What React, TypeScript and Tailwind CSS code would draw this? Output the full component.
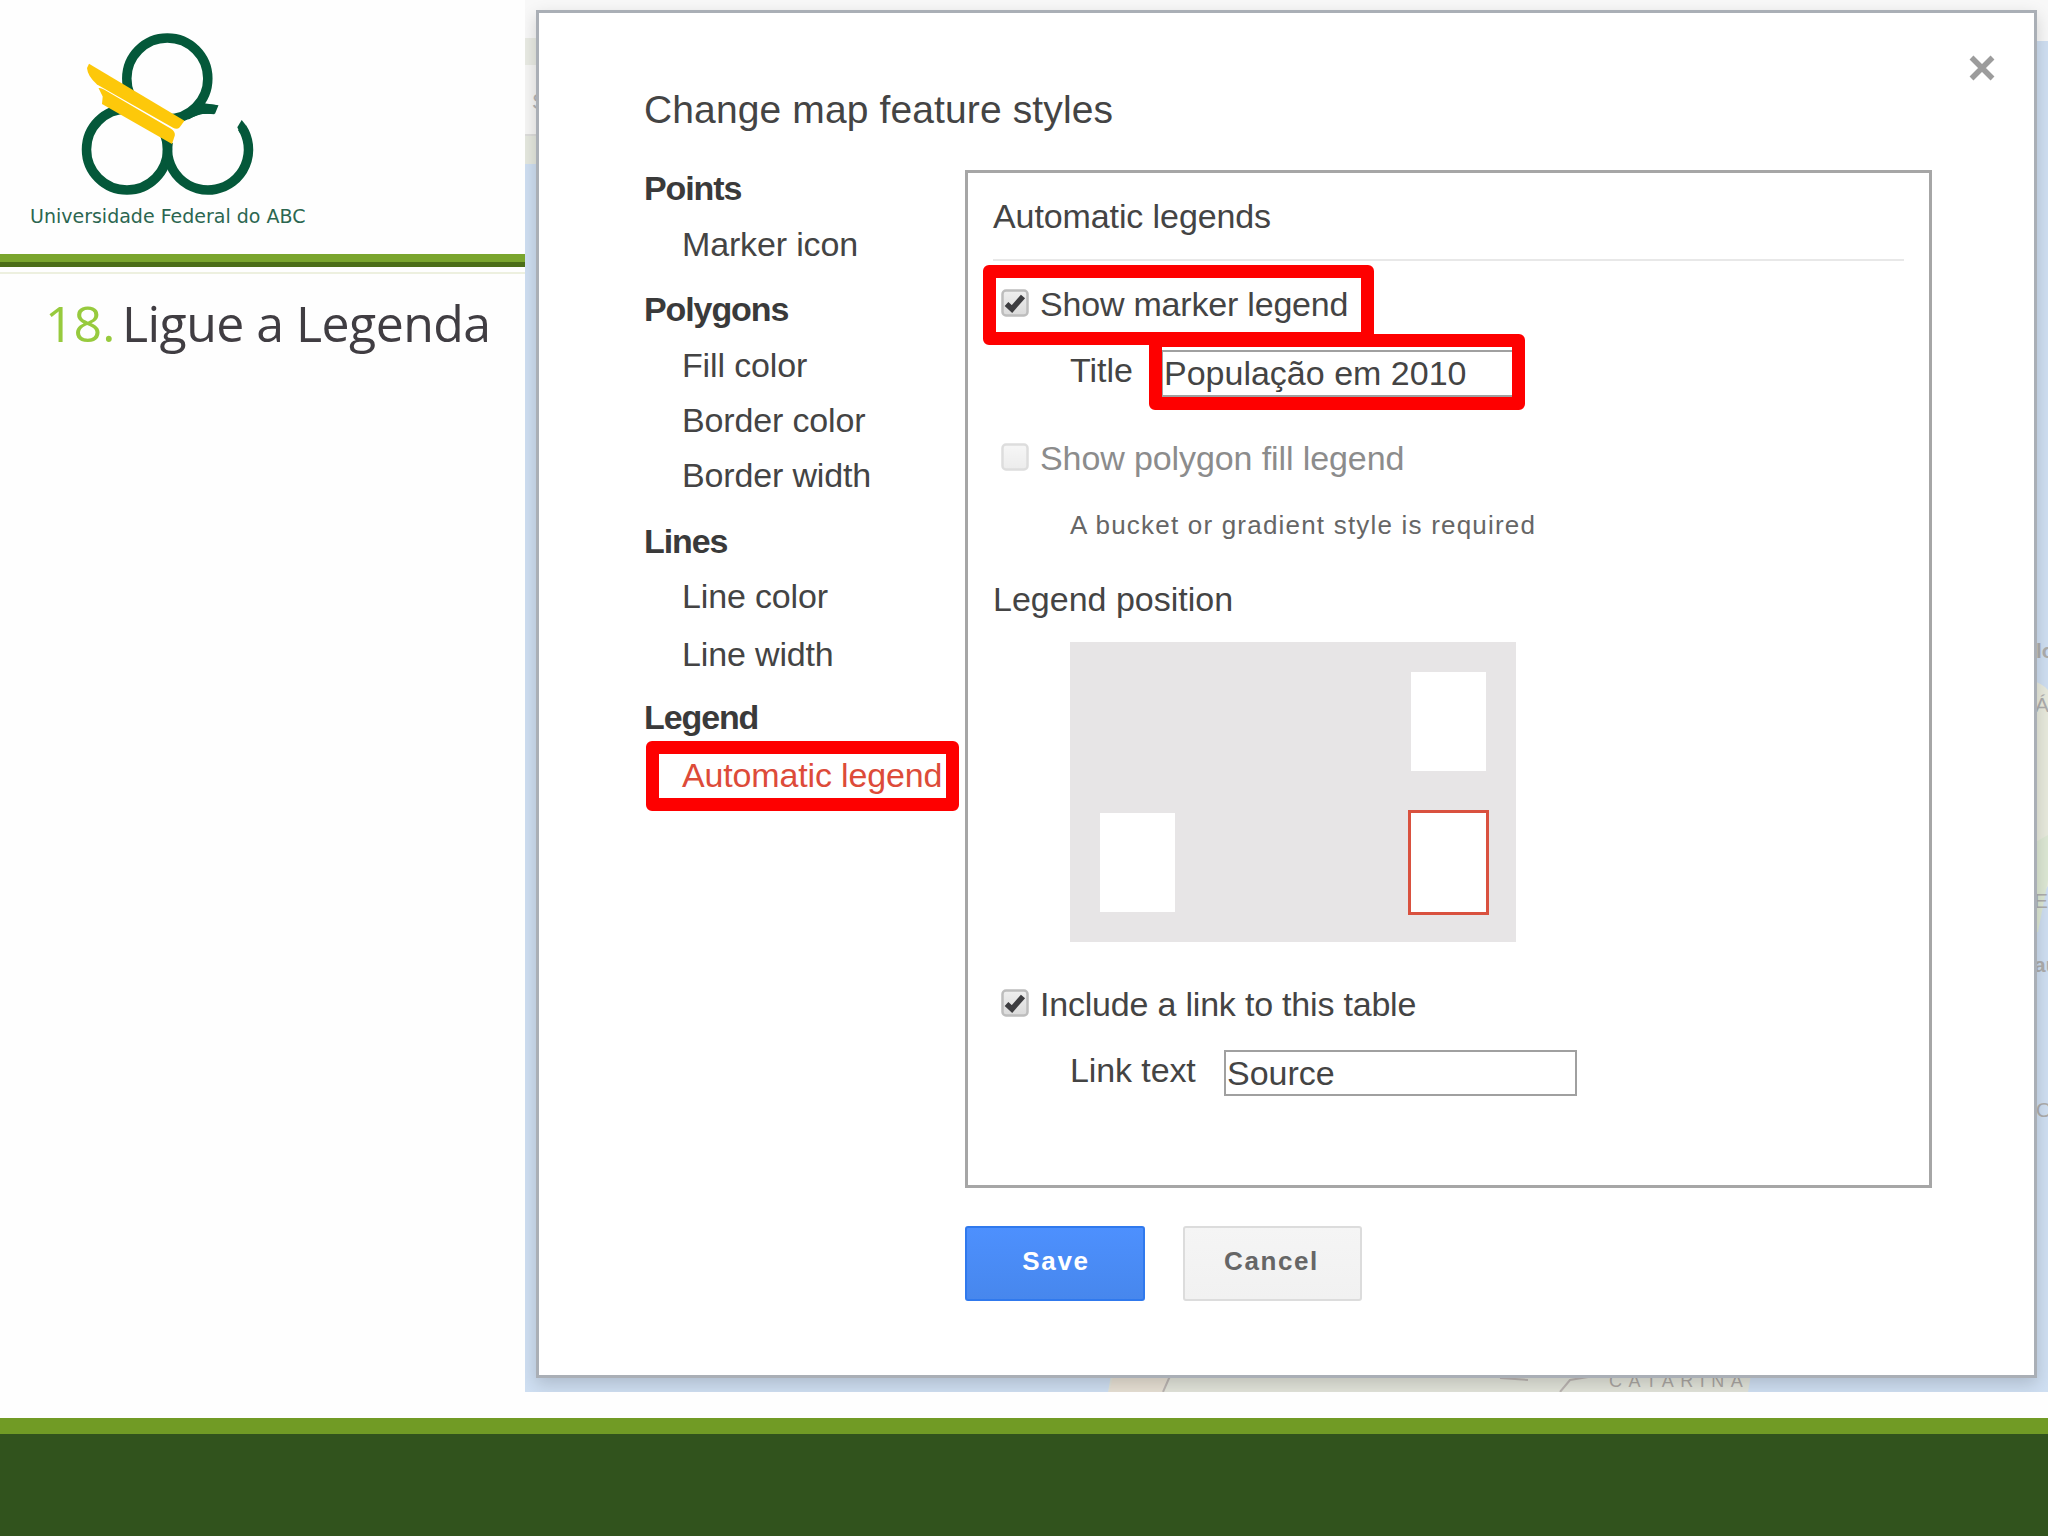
import React from 'react';

const groups: { title: string; className: string; items: { label: string; className: string; active?: boolean }[] }[] = [
  { title: 'Points', className: '', items: [{ label: 'Marker icon', className: 'mt-4' }] },
  {
    title: 'Polygons',
    className: 'mt-[25px]',
    items: [
      { label: 'Fill color', className: 'mt-4' },
      { label: 'Border color', className: 'mt-[15px]' },
      { label: 'Border width', className: 'mt-[15px]' },
    ],
  },
  {
    title: 'Lines',
    className: 'mt-[26px]',
    items: [
      { label: 'Line color', className: 'mt-[15px]' },
      { label: 'Line width', className: 'mt-[18px]' },
    ],
  },
  {
    title: 'Legend',
    className: 'mt-[23px]',
    items: [{ label: 'Automatic legend', className: 'mt-[18px]', active: true }],
  },
];

const Logo: React.FC = () => (
  <svg width="180" height="170" viewBox="78 28 180 170" className="block">
    <g fill="none" stroke="#04583a" strokeWidth="9.500">
      <circle cx="167.3" cy="78.500" r="40.500" />
      <circle cx="127" cy="149.500" r="40.500" />
      <path d="M215 109.600 A40.500 40.500 0 0 0 186 115.500" />
      <path d="M168.200 142 A40.500 40.500 0 1 0 242 127.500" />
    </g>
    <g fill="#04583a">
      <path d="M203 101 L205.500 103.500 L218.500 105.300 L215 113.700 L200 114 L184 121 L178 116 Z" />
      <path d="M241.700 120 L237.300 127.300 L240 133 L247 129 L245.300 124.500 Z" />
    </g>
    <path d="M96 86 L178 131.500" stroke="#fff" strokeWidth="9" />
    <path d="M89 63.700 L184.500 120.700 L179.500 127.500 Q177 130 173 127.800 L97 84.500 Q87.500 76 87 68 Z" fill="#fdc80a" />
    <path d="M98.500 88 Q101 87.500 104 89.500 L171 128.800 Q175.500 132 174.800 135.500 L172 144 L102 104 L102.700 96.500 Z" fill="#fdc80a" />
  </svg>
);

const MapBackground: React.FC = () => (
  <svg
    width="1523"
    height="1392"
    viewBox="525 0 1523 1392"
    className="absolute inset-0"
    fontFamily="'Liberation Sans', sans-serif"
  >
    <rect x="525" y="0" width="1523" height="1392" fill="#cfdff2" />
    <rect x="525" y="0" width="1523" height="41" fill="#f8f8f8" />
    <rect x="525" y="38" width="40" height="27" fill="#e9ebe4" />
    <rect x="525" y="65" width="40" height="70" fill="#f6f6f5" />
    <rect x="525" y="134" width="40" height="2" fill="#dddddb" />
    <rect x="525" y="136" width="40" height="28" fill="#e5e8df" />
    <text x="532" y="109" fontSize="22" fill="#b5b5b5">S</text>
    <path d="M2030 680 Q2042 683 2048 690 V886 L2040 898 L2030 932 Z" fill="#e8eadd" />
    <path d="M2030 845 L2048 835 V880 L2038 932 L2030 932 Z" fill="#dde8d4" />
    <g fontSize="21" fill="#adadad">
      <text x="2036" y="658" fontWeight="bold">lo</text>
      <text x="2035" y="712">Á</text>
      <text x="2034" y="908">E</text>
      <text x="2034" y="972" fontWeight="bold">au</text>
      <text x="2036" y="1117">Oc</text>
    </g>
    <path d="M1112 1370 H1752 L1748 1392 H1108 Z" fill="#e2e4da" />
    <path d="M1115 1370 H1170 L1163 1392 H1109 Z" fill="#e7e0d4" />
    <path d="M1170 1376 L1163 1392 M1500 1378 L1528 1380 M1560 1392 L1570 1380 L1588 1377" stroke="#bbb5b2" strokeWidth="2" fill="none" />
    <text x="1609" y="1387" fontSize="18" letterSpacing="6.500" fill="#aaa6a2">CATARINA</text>
  </svg>
);

const Checkbox: React.FC<{ checked?: boolean; disabled?: boolean }> = ({ checked, disabled }) => (
  <svg width="28" height="28" viewBox="0 0 28 28" className="-mt-0.5 mr-[11px] shrink-0" opacity={disabled ? 0.5 : 1}>
    <defs>
      <linearGradient id="box" x1="0" y1="0" x2="0" y2="1">
        <stop offset="0" stopColor="#efefef" />
        <stop offset="1" stopColor="#dadada" />
      </linearGradient>
    </defs>
    <rect x="1.500" y="1.500" width="25" height="25" rx="3.500" fill="url(#box)" stroke="#bdbdbd" strokeWidth="2.500" />
    {checked && <path d="M5.500 15 L11 20 L22 7.500" fill="none" stroke="#3d3d40" strokeWidth="5.500" />}
  </svg>
);

const Highlight: React.FC<{ className: string }> = ({ className }) => (
  <div className={`absolute rounded-md bg-transparent border-[13px] border-[#fe0000] ${className}`} />
);

const Sidebar: React.FC = () => (
  <nav className="w-[321px] shrink-0">
    {groups.map((group) => (
      <div key={group.title} className={group.className}>
        <h3 className="font-bold tracking-[-1.1px] text-[#3a3a3a]">{group.title}</h3>
        {group.items.map((item) => (
          <div
            key={item.label}
            className={`pl-[38px] tracking-[-0.15px] ${item.className} ${item.active ? 'text-[#dd4b39]' : ''}`}
          >
            {item.label}
          </div>
        ))}
      </div>
    ))}
  </nav>
);

const LegendPanel: React.FC = () => (
  <section className="mt-0.5 w-[967px] h-[1018px] border-[3px] border-[#a6a6a6] px-[25px] pt-[23px]">
    <h3 className="tracking-[-0.1px]">Automatic legends</h3>
    <div className="mt-[23px] h-0.5 bg-[#e8e8e8]" />
    <div className="mt-[23px] flex items-center pl-2 tracking-[-0.2px]">
      <Checkbox checked />
      Show marker legend
    </div>
    <div className="mt-[26px] flex pl-[77px]">
      <span className="w-[91px]">Title</span>
      <div className="h-[47px] w-[360px] border-2 border-[#a0a0a0] bg-white pl-px pt-px">População em 2010</div>
    </div>
    <div className="mt-[41px] flex items-center pl-2 tracking-[-0.1px] text-[#8c8c8c]">
      <Checkbox disabled />
      Show polygon fill legend
    </div>
    <p className="mt-8 pl-[77px] text-[26px] leading-[30px] tracking-[1.2px] text-[#666]">
      A bucket or gradient style is required
    </p>
    <h3 className="mt-[39px]">Legend position</h3>
    <div className="mt-[23px] ml-[77px] flex h-[300px] w-[446px] items-end justify-between bg-[#e7e5e6] pl-[30px] pr-[27px] pb-[27px]">
      <div className="mb-[3px] h-[99px] w-[75px] bg-white" />
      <div className="flex flex-col items-center gap-[39px]">
        <div className="h-[99px] w-[75px] bg-white" />
        <div className="h-[105px] w-[81px] border-[3px] border-[#d9513f] bg-white" />
      </div>
    </div>
    <div className="mt-[42px] flex items-center pl-2 tracking-[-0.2px]">
      <Checkbox checked />
      Include a link to this table
    </div>
    <div className="mt-[26px] flex pl-[77px]">
      <span className="w-[154px] tracking-[-0.1px]">Link text</span>
      <div className="h-[46px] w-[353px] border-2 border-[#a0a0a0] bg-white pl-px pt-px">Source</div>
    </div>
  </section>
);

const Dialog: React.FC = () => (
  <div className="relative h-[1368px] w-[1501px] border-[3px] border-[#aaafb6] bg-white pl-[105px] pt-[75px] text-[34px] leading-10 text-[#444] whitespace-nowrap shadow-[0_6px_16px_rgba(0,0,0,0.16)]">
    <svg width="28" height="28" viewBox="0 0 28 28" className="absolute right-[38px] top-[41px]">
      <path d="M3.500 3.500 L24.500 24.500 M24.500 3.500 L3.500 24.500" stroke="#9c9c9c" strokeWidth="5.500" />
    </svg>
    <h2 className="text-[39px] leading-[44px] tracking-[0.12px]">Change map feature styles</h2>
    <div className="mt-9 flex">
      <Sidebar />
      <LegendPanel />
    </div>
    <div className="mt-[38px] flex gap-[38px] pl-[321px] text-[26px] font-bold">
      <button className="h-[75px] w-[180px] rounded-[3px] border-2 border-[#3079ed] bg-linear-to-b from-[#4d90fe] to-[#4787ed] pb-1.5 pl-0.5 tracking-[1.7px] text-white">
        Save
      </button>
      <button className="h-[75px] w-[179px] rounded-[3px] border-2 border-[#dcdcdc] bg-linear-to-b from-[#f5f5f5] to-[#f1f1f1] pb-1.5 pr-[18px] pl-4 tracking-[1.6px] text-[#666]">
        Cancel
      </button>
    </div>
    <Highlight className="left-[444px] top-[252px] h-20 w-[391px]" />
    <Highlight className="left-[610px] top-[321px] h-[76px] w-[376px]" />
    <Highlight className="left-[107px] top-[728px] h-[70px] w-[313px]" />
  </div>
);

const App: React.FC = () => (
  <div className="flex h-[1536px] w-[2048px] flex-col overflow-hidden bg-[#fefefe] font-['Liberation_Sans',Arial,sans-serif]">
    <div className="flex h-[1392px]">
      <aside className="w-[525px] shrink-0 whitespace-nowrap">
        <div className="h-[254px] pl-[78px] pt-7">
          <Logo />
          <div className="-ml-12 mt-1.5 font-['DejaVu_Sans',sans-serif] text-[19px] leading-6 text-[#2b6650]">
            Universidade Federal do ABC
          </div>
        </div>
        <div className="h-[13px] border-b-[5px] border-[#4b6d18] bg-[#7aa52e]" />
        <div className="mt-[5px] h-0.5 bg-[#edf0df]" />
        <h1 className="mt-[19px] flex pl-[45px] font-['Open_Sans',sans-serif] text-[50px] leading-[60px] tracking-[-0.55px] text-[#403d42]">
          <span className="w-[77px] tracking-normal text-[#97ca3d]">18.</span>
          Ligue a Legenda
        </h1>
      </aside>
      <main className="relative w-[1523px] overflow-hidden pl-[11px] pt-[10px]">
        <MapBackground />
        <Dialog />
      </main>
    </div>
    <footer className="mt-[26px] h-[118px] border-t-[16px] border-[#719b25] bg-[#31531d]" />
  </div>
);

export default App;
